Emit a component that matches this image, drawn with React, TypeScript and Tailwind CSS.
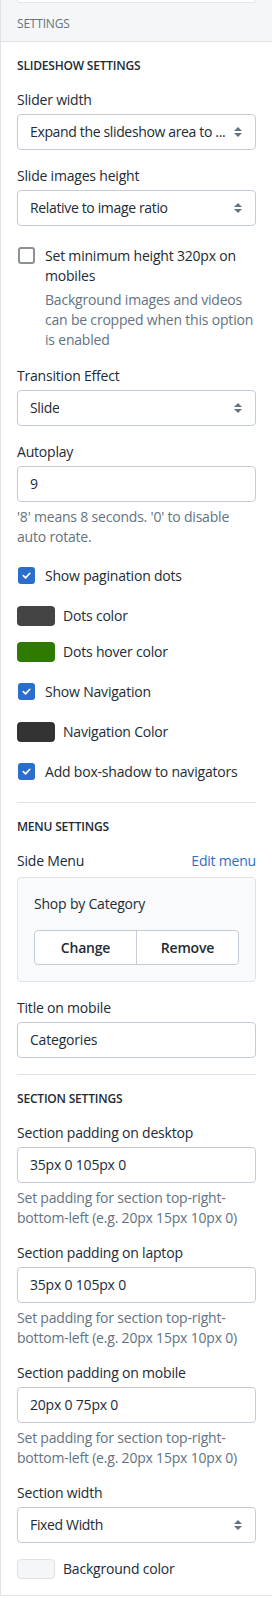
import React from "react";

const font = { fontFamily: '"Open Sans", "Noto Sans", sans-serif' };

const SelectArrows = () => (
  <svg width="10" height="14" viewBox="0 0 10 14" className="shrink-0">
    <path d="M5 2 L9 6 H1 Z" fill="#637381" />
    <path d="M5 12 L9 8 H1 Z" fill="#637381" />
  </svg>
);

const Label = ({ children, className = "" }: { children: React.ReactNode; className?: string }) => (
  <div className={`text-sm leading-5 text-[#212b36] ${className}`}>{children}</div>
);

const Select = ({ value }: { value: string }) => (
  <div className="mt-1 flex h-9 items-center justify-between gap-1 rounded border border-[#c4cdd5] bg-white pl-3 pr-3">
    <span className="min-w-0 overflow-hidden whitespace-nowrap text-sm tracking-[-0.35px] text-[#212b36]">{value}</span>
    <SelectArrows />
  </div>
);

const Input = ({ value }: { value: string }) => (
  <div className="mt-1 flex h-9 items-center rounded border border-[#c4cdd5] bg-white px-3">
    <span className="text-sm text-[#212b36]">{value}</span>
  </div>
);

const Help = ({ children }: { children: React.ReactNode }) => (
  <div className="mt-[5px] mb-[-1px] text-sm leading-5 text-[#637381]">{children}</div>
);

const Checkbox = ({ checked, label, className = "" }: { checked: boolean; label: string; className?: string }) => (
  <div className={`flex items-start gap-[10px] ${className}`}>
    <div className="mt-[1px] ml-[1px] shrink-0">
      {checked ? (
        <div className="flex h-[17px] w-[17px] items-center justify-center rounded-[3px] bg-[#2c6ecb]">
          <svg width="11" height="11" viewBox="0 0 12 12">
            <path d="M2.5 6.2 L5 8.6 L9.6 3.6" fill="none" stroke="white" strokeWidth="1.8" strokeLinecap="round" strokeLinejoin="round" />
          </svg>
        </div>
      ) : (
        <div className="h-[17px] w-[17px] rounded-[3px] border-2 border-[#8c9196] bg-white" />
      )}
    </div>
    <div className="text-sm leading-5 text-[#212b36]">{label}</div>
  </div>
);

const Swatch = ({ color, label, className = "" }: { color: string; label: string; className?: string }) => (
  <div className={`flex items-center gap-[8px] ${className}`}>
    <div className={`h-5 w-[38px] shrink-0 rounded ${color}`} />
    <div className="text-sm leading-5 text-[#212b36]">{label}</div>
  </div>
);

const Heading = ({ children, className = "" }: { children: React.ReactNode; className?: string }) => (
  <div className={`text-xs font-semibold uppercase leading-4 text-[#212b36] ${className}`}>{children}</div>
);

export default function App() {
  return (
    <div className="w-[272px] border-l border-b border-[#dfe3e8] bg-white tracking-[-0.2px]" style={font}>
      {/* Header */}
      <div className="border-b border-[#dfe3e8] bg-[#f4f6f8] pb-[9px]">
        <div className="mx-4 h-[3px] rounded-b border border-t-0 border-[#e4e7ea] bg-white" />
        <div className="mt-[13px] px-4 text-xs uppercase leading-4 text-[#637381]">Settings</div>
      </div>

      <div className="flex flex-col px-4 pt-4 pb-4">
        <Heading>Slideshow settings</Heading>

        <Label className="mt-4">Slider width</Label>
        <Select value="Expand the slideshow area to ..." />

        <Label className="mt-4">Slide images height</Label>
        <Select value="Relative to image ratio" />

        <div className="mt-5">
          <Checkbox checked={false} label="Set minimum height 320px on mobiles" />
          <div className="ml-[28px] mt-1 text-sm leading-5 text-[#637381]">
            Background images and videos can be cropped when this option is enabled
          </div>
        </div>

        <Label className="mt-4">Transition Effect</Label>
        <Select value="Slide" />

        <Label className="mt-4">Autoplay</Label>
        <Input value="9" />
        <Help>'8' means 8 seconds. '0' to disable auto rotate.</Help>

        <Checkbox className="mt-5" checked label="Show pagination dots" />
        <Swatch className="mt-5" color="bg-[#444444]" label="Dots color" />
        <Swatch className="mt-4" color="bg-[#2f7a00]" label="Dots hover color" />
        <Checkbox className="mt-5" checked label="Show Navigation" />
        <Swatch className="mt-5" color="bg-[#333333]" label="Navigation Color" />
        <Checkbox className="mt-5" checked label="Add box-shadow to navigators" />

        <div className="mt-5 border-t border-[#dfe3e8]" />

        <Heading className="mt-4">Menu settings</Heading>

        <div className="mt-4 flex items-center justify-between text-sm leading-5">
          <span className="text-[#212b36]">Side Menu</span>
          <span className="text-[#2c6ecb]">Edit menu</span>
        </div>
        <div className="mt-1.5 rounded border border-[#dfe3e8] bg-[#f9fafb] p-4">
          <div className="text-sm leading-5 text-[#212b36]">Shop by Category</div>
          <div className="mt-4 flex h-[35px] rounded border border-[#c4cdd5] bg-white">
            <div className="flex flex-1 items-center justify-center border-r border-[#c4cdd5] text-sm font-semibold text-[#212b36]">
              Change
            </div>
            <div className="flex flex-1 items-center justify-center text-sm font-semibold text-[#212b36]">Remove</div>
          </div>
        </div>

        <Label className="mt-4">Title on mobile</Label>
        <Input value="Categories" />

        <div className="mt-4 border-t border-[#dfe3e8]" />

        <Heading className="mt-4">Section settings</Heading>

        <Label className="mt-4">Section padding on desktop</Label>
        <Input value="35px 0 105px 0" />
        <Help>Set padding for section top-right-bottom-left (e.g. 20px 15px 10px 0)</Help>

        <Label className="mt-4">Section padding on laptop</Label>
        <Input value="35px 0 105px 0" />
        <Help>Set padding for section top-right-bottom-left (e.g. 20px 15px 10px 0)</Help>

        <Label className="mt-4">Section padding on mobile</Label>
        <Input value="20px 0 75px 0" />
        <Help>Set padding for section top-right-bottom-left (e.g. 20px 15px 10px 0)</Help>

        <Label className="mt-4">Section width</Label>
        <Select value="Fixed Width" />

        <div className="mt-4 flex items-center gap-[8px]">
          <div className="h-5 w-[38px] shrink-0 rounded border border-[#dfe3e8] bg-[#f4f6f8]" />
          <div className="text-sm leading-5 text-[#212b36]">Background color</div>
        </div>
      </div>
    </div>
  );
}
